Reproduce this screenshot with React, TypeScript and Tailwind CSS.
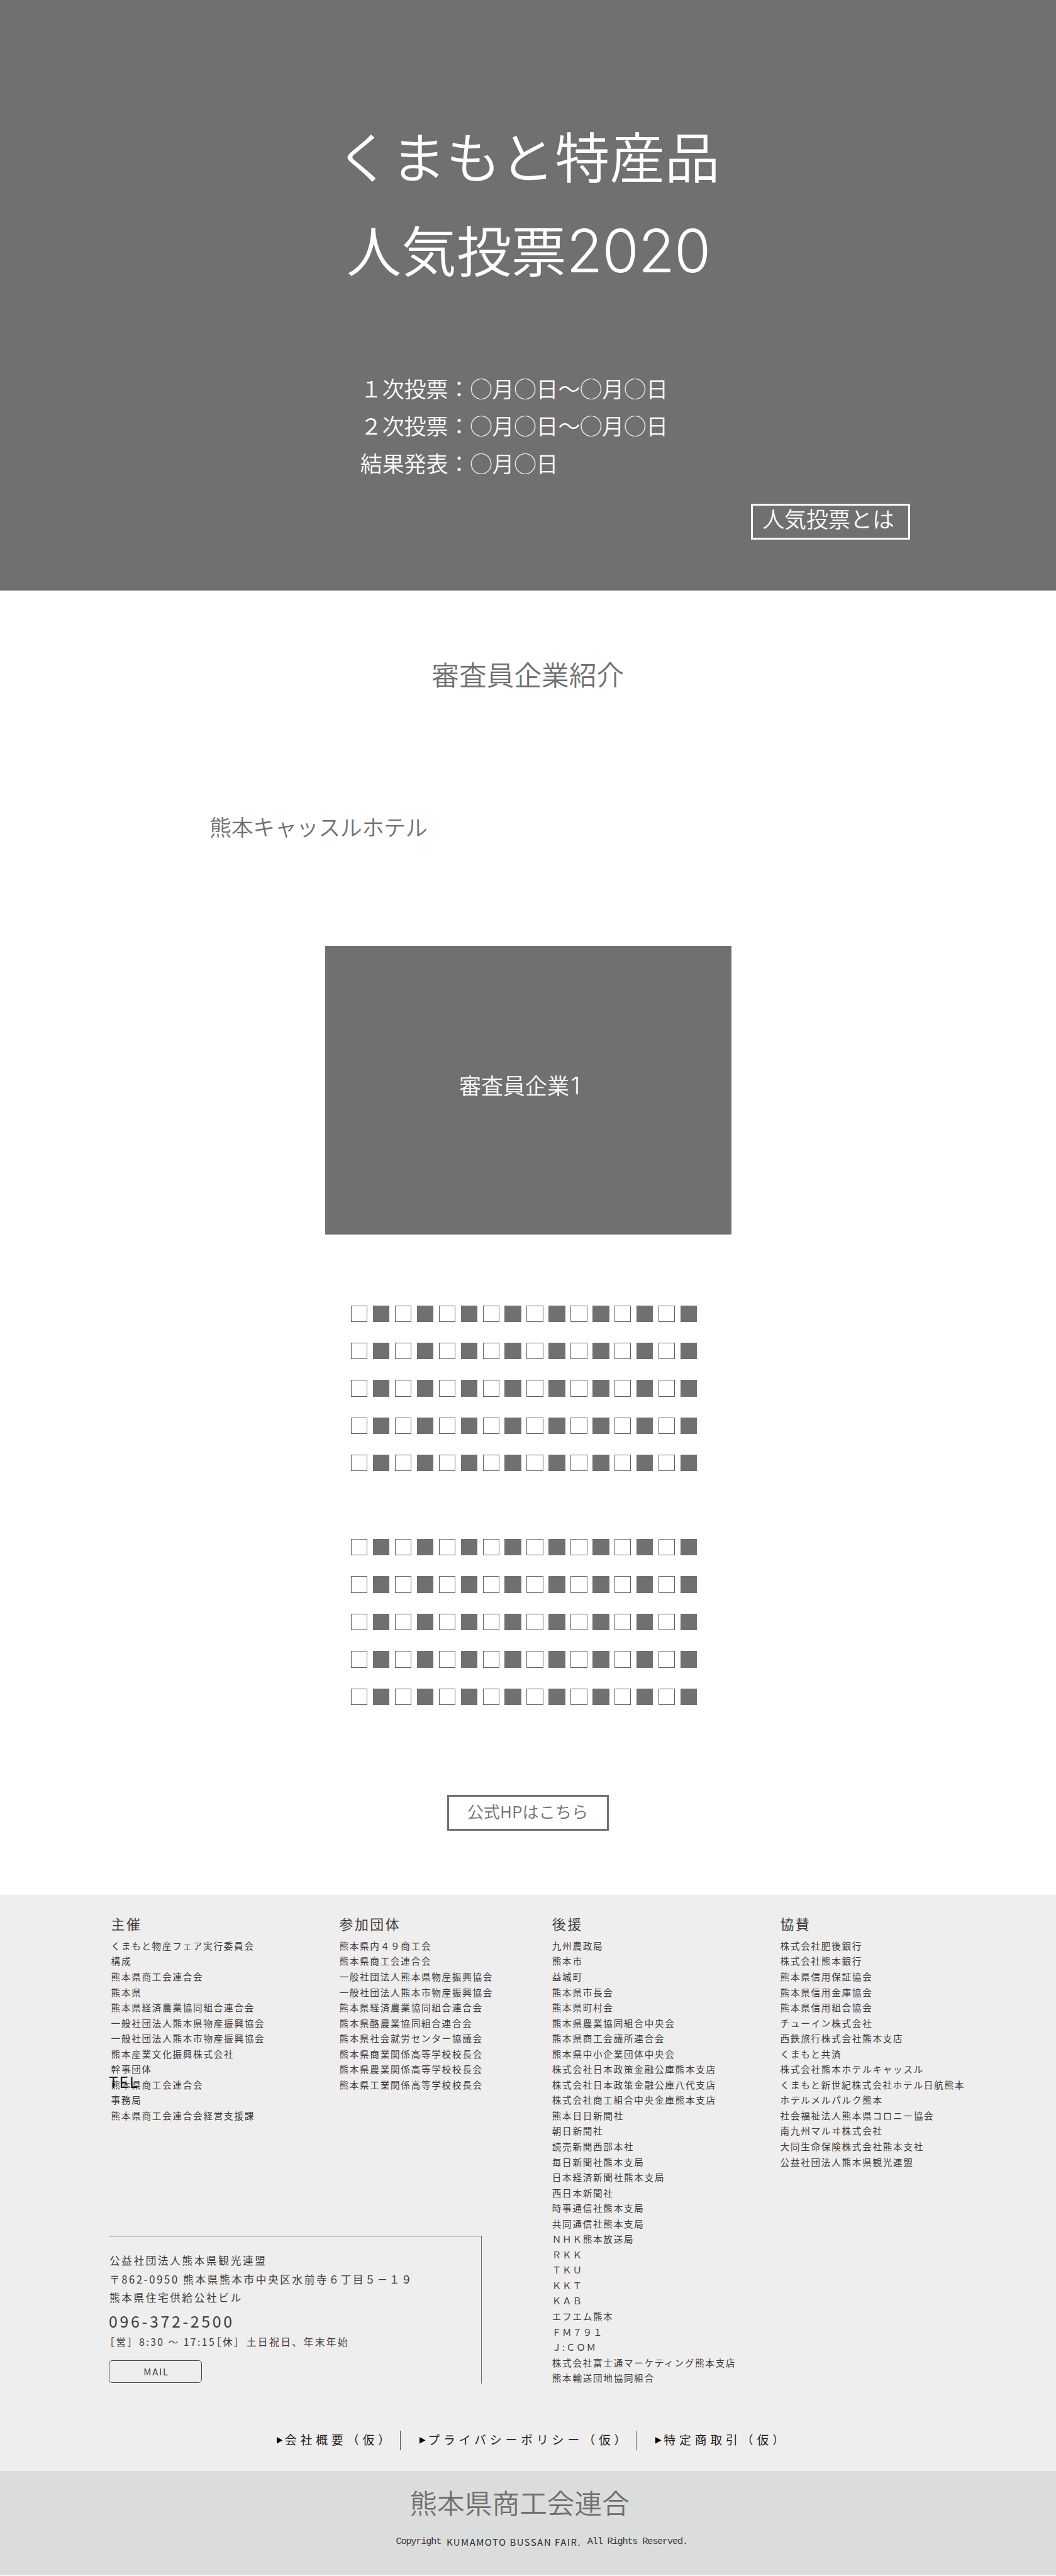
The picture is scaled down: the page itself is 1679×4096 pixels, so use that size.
import React from "react";

const organizers = [
  "くまもと物産フェア実行委員会",
  "構成",
  "熊本県商工会連合会",
  "熊本県",
  "熊本県経済農業協同組合連合会",
  "一般社団法人熊本県物産振興協会",
  "一般社団法人熊本市物産振興協会",
  "熊本産業文化振興株式会社",
  "幹事団体",
  "熊本県商工会連合会",
  "事務局",
  "熊本県商工会連合会経営支援課",
];

const participants = [
  "熊本県内４９商工会",
  "熊本県商工会連合会",
  "一般社団法人熊本県物産振興協会",
  "一般社団法人熊本市物産振興協会",
  "熊本県経済農業協同組合連合会",
  "熊本県酪農業協同組合連合会",
  "熊本県社会就労センター協議会",
  "熊本県商業関係高等学校校長会",
  "熊本県農業関係高等学校校長会",
  "熊本県工業関係高等学校校長会",
];

const supporters = [
  "九州農政局",
  "熊本市",
  "益城町",
  "熊本県市長会",
  "熊本県町村会",
  "熊本県農業協同組合中央会",
  "熊本県商工会議所連合会",
  "熊本県中小企業団体中央会",
  "株式会社日本政策金融公庫熊本支店",
  "株式会社日本政策金融公庫八代支店",
  "株式会社商工組合中央金庫熊本支店",
  "熊本日日新聞社",
  "朝日新聞社",
  "読売新聞西部本社",
  "毎日新聞社熊本支局",
  "日本経済新聞社熊本支局",
  "西日本新聞社",
  "時事通信社熊本支局",
  "共同通信社熊本支局",
  "ＮＨＫ熊本放送局",
  "ＲＫＫ",
  "ＴＫＵ",
  "ＫＫＴ",
  "ＫＡＢ",
  "エフエム熊本",
  "ＦＭ７９１",
  "Ｊ:ＣＯＭ",
  "株式会社富士通マーケティング熊本支店",
  "熊本輸送団地協同組合",
];

const sponsors = [
  "株式会社肥後銀行",
  "株式会社熊本銀行",
  "熊本県信用保証協会",
  "熊本県信用金庫協会",
  "熊本県信用組合協会",
  "チューイン株式会社",
  "西鉄旅行株式会社熊本支店",
  "くまもと共済",
  "株式会社熊本ホテルキャッスル",
  "くまもと新世紀株式会社ホテル日航熊本",
  "ホテルメルパルク熊本",
  "社会福祉法人熊本県コロニー協会",
  "南九州マルヰ株式会社",
  "大同生命保険株式会社熊本支社",
  "公益社団法人熊本県観光連盟",
];

function NameList({ title, items }: { title: string; items: string[] }) {
  return (
    <section className="whitespace-nowrap text-[#40383a]">
      <h3 className="text-[25px] leading-[36px] tracking-[3px]">{title}</h3>
      <ul className="mt-[8px] text-[16.7px] leading-[28.08px] tracking-[1.97px]">
        {items.map((item, i) => (
          <li key={i}>{item}</li>
        ))}
      </ul>
    </section>
  );
}

function DummyParagraph() {
  return (
    <div>
      {[0, 1, 2, 3, 4].map((row) => (
        <div key={row} className="flex h-[68px] items-center gap-[10px]">
          {Array.from({ length: 16 }, (_, i) => (
            <span
              key={i}
              className={
                i % 2 === 0
                  ? "size-[30px] border border-[#606060]"
                  : "size-[30px] bg-[#707070]"
              }
            />
          ))}
        </div>
      ))}
    </div>
  );
}

function FooterLink({ label }: { label: string }) {
  return (
    <a className="flex items-center whitespace-nowrap text-[21.5px] leading-[35px] tracking-[6.8px] text-[#1c1c1c]">
      <svg className="mr-[4px] h-[12px] w-[11px]" viewBox="0 0 11 12">
        <path d="M0 0 L11 6 L0 12 Z" fill="#000" />
      </svg>
      <span className="relative -top-px">{label}</span>
    </a>
  );
}

export default function App() {
  return (
    <div className="h-[4096px] w-full overflow-hidden bg-[#f4f5f4]">
      <div
        lang="ja"
        className="w-[1921px] bg-white font-['Noto_Sans_CJK_JP',sans-serif] [zoom:0.8743]"
      >
        <header className="h-[1074px] bg-[#707070] pt-[197px] font-[350] text-white">
          <h1 className="text-[100px] leading-[170px] whitespace-nowrap">
            <span className="block h-[170px] pl-[611px]">くまもと特産品</span>
            <span className="block h-[170px] pl-[630px]">
              人気投票
              <span className="font-['Inter'] text-[108px] leading-none tracking-[-1px]">
                2020
              </span>
            </span>
          </h1>
          <div className="mt-[134px] pl-[655px] text-[40px] leading-[68px] whitespace-nowrap">
            <p>１次投票：◯月◯日〜◯月◯日</p>
            <p>２次投票：◯月◯日〜◯月◯日</p>
            <p>結果発表：◯月◯日</p>
          </div>
          <a className="mt-[41px] ml-[1366px] block h-[65px] w-[289px] border-[3.5px] border-white pl-[17px] text-[40px] leading-[46px] whitespace-nowrap">
            人気投票とは
          </a>
        </header>

        <main className="h-[2372px] pt-[112px] font-[350] text-[#707070]">
          <h2 className="pl-[785px] text-[50px] leading-[80px]">審査員企業紹介</h2>
          <h3 className="mt-[203px] pl-[381px] text-[40px] leading-[68px] tracking-[-0.4px]">
            熊本キャッスルホテル
          </h3>
          <div className="mt-[183px] ml-[591px] h-[525px] w-[739px] bg-[#707070] pt-[219px] pl-[244px] text-[40px] leading-[68px] text-white">
            審査員企業
            <span className="ml-[3px] font-['Inter'] text-[43px] leading-none">1</span>
          </div>
          <div className="mt-[110px] flex flex-col gap-[85px] pl-[638px]">
            <DummyParagraph />
            <DummyParagraph />
          </div>
          <a className="mt-[145px] ml-[813px] block h-[65px] w-[294px] border-[3.5px] border-[#707070] pl-[33px] text-[30px] leading-[54px] whitespace-nowrap">
            公式HPはこちら
          </a>
        </main>

        <footer>
          <div className="h-[1048px] bg-[#eeeeee] pt-[35px]">
            <div className="flex h-[940px] pl-[198px]">
              <div className="w-[806px]">
                <div className="relative flex h-[585px] pl-[4px]">
                  <div className="w-[415px]">
                    <NameList title="主催" items={organizers} />
                  </div>
                  <NameList title="参加団体" items={participants} />
                  <span className="absolute top-[286px] left-0 text-[28px] leading-[40px] tracking-[2px] text-[#1c1c1c]">
                    TEL
                  </span>
                </div>
                <address className="h-[269px] w-[678px] border-t-2 border-r-2 border-[#707070] pt-[28px] whitespace-nowrap text-[#40383a] not-italic">
                  <div className="pl-[1px] text-[19px] leading-[33.4px] tracking-[3.04px]">
                    <p>公益社団法人熊本県観光連盟</p>
                    <p>〒862-0950 熊本県熊本市中央区水前寺６丁目５－１９</p>
                    <p>熊本県住宅供給公社ビル</p>
                  </div>
                  <p className="mt-[3px] text-[28.5px] leading-[44px] tracking-[4.2px]">
                    096-372-2500
                  </p>
                  <p className="mt-[2px] flex text-[18px] leading-[30px] tracking-[2.8px]">
                    <span className="-ml-[8px] w-[63px]">［営］</span>
                    <span className="w-[131px]">8:30 〜 17:15</span>
                    <span className="w-[64px]">［休］</span>
                    <span>土日祝日、年末年始</span>
                  </p>
                  <a className="mt-[18px] block h-[41px] w-[169px] rounded-[6px] border border-[#404040] pl-[62px] text-[17px] leading-[40px] tracking-[2px]">
                    MAIL
                  </a>
                </address>
              </div>
              <div className="w-[415px]">
                <NameList title="後援" items={supporters} />
              </div>
              <NameList title="協賛" items={sponsors} />
            </div>
            <nav className="flex h-[35px] items-center pl-[503px]">
              <div className="w-[225px]">
                <FooterLink label="会社概要（仮）" />
              </div>
              <div className="h-[35px] w-[430px] border-x border-[#505050] pl-[34px]">
                <FooterLink label="プライバシーポリシー（仮）" />
              </div>
              <div className="pl-[34px]">
                <FooterLink label="特定商取引（仮）" />
              </div>
            </nav>
          </div>
          <div className="h-[189px] bg-[#dbdddc] pt-[17px]">
            <p className="pl-[745px] text-[50px] leading-[80px] font-[350] text-[#707070]">
              熊本県商工会連合
            </p>
            <p className="mt-[20px] flex pl-[720px] text-[17px] leading-[24px] whitespace-nowrap text-[#40383a]">
              <span className="w-[92px] font-['Liberation_Mono'] text-[17.5px] tracking-[-1.4px]">
                Copyright
              </span>
              <span className="w-[256px] tracking-[1.75px] text-[#2c2c2c]">
                KUMAMOTO BUSSAN FAIR.
              </span>
              <span className="font-['Liberation_Mono'] text-[17.5px] tracking-[-1.4px]">
                All Rights Reserved.
              </span>
            </p>
          </div>
        </footer>
      </div>
    </div>
  );
}
